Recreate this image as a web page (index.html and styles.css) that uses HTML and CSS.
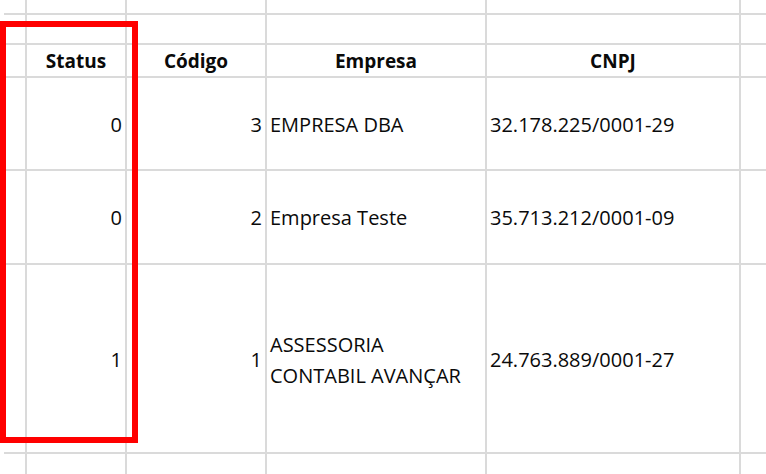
FILE: index.html
```html
<!DOCTYPE html>
<html lang="pt-BR">
<head>
<meta charset="utf-8">
<title>Empresas</title>
<link rel="stylesheet" href="styles.css">
</head>
<body>
<div class="sheet">
  <div class="grid">
    <div class="c"></div><div class="c"></div><div class="c"></div><div class="c"></div><div class="c"></div><div class="c"></div>
    <div class="c"></div><div class="c"></div><div class="c"></div><div class="c"></div><div class="c"></div><div class="c"></div>

    <div class="c"></div>
    <div class="c head">Status</div>
    <div class="c head">Código</div>
    <div class="c head">Empresa</div>
    <div class="c head">CNPJ</div>
    <div class="c"></div>

    <div class="c"></div>
    <div class="c num">0</div>
    <div class="c num">3</div>
    <div class="c txt">EMPRESA DBA</div>
    <div class="c txt">32.178.225/0001-29</div>
    <div class="c"></div>

    <div class="c"></div>
    <div class="c num">0</div>
    <div class="c num">2</div>
    <div class="c txt">Empresa Teste</div>
    <div class="c txt">35.713.212/0001-09</div>
    <div class="c"></div>

    <div class="c"></div>
    <div class="c num">1</div>
    <div class="c num">1</div>
    <div class="c txt wrap">ASSESSORIA<br>CONTABIL AVANÇAR</div>
    <div class="c txt">24.763.889/0001-27</div>
    <div class="c"></div>

    <div class="c"></div><div class="c"></div><div class="c"></div><div class="c"></div><div class="c"></div><div class="c"></div>
  </div>
  <div class="highlight"></div>
</div>
</body>
</html>
```
FILE: styles.css
```css
html, body {
  margin: 0;
  padding: 0;
  background: #ffffff;
  overflow: hidden;
}

.sheet {
  position: relative;
  width: 766px;
  height: 474px;
  overflow: hidden;
  background: #ffffff;
  padding-left: 4px;
  box-sizing: border-box;
}

.grid {
  display: grid;
  grid-template-columns: 21px 98px 138px 218px 252px 40px;
  grid-template-rows: 13px 28px 31px 91px 92px 187px 40px;
  gap: 2px;
  background: #dadada;
  width: 785px;
  font-family: "Open Sans", "Liberation Sans", sans-serif;
  font-size: 20px;
  color: #0a0a0a;
}

.c {
  background: #ffffff;
  display: flex;
  align-items: center;
  min-width: 0;
  white-space: nowrap;
  line-height: 26px;
}

.head {
  font-weight: 700;
  font-size: 19px;
  justify-content: center;
  align-items: flex-end;
  padding-bottom: 2px;
}

.num {
  justify-content: flex-end;
  padding: 2px 3px 0 0;
}

.txt {
  justify-content: flex-start;
  padding: 2px 0 0 3px;
}

.wrap {
  line-height: 31px;
}

.highlight {
  position: absolute;
  left: 0;
  top: 21px;
  width: 138px;
  height: 422px;
  border: 6px solid #ff0000;
  box-sizing: border-box;
  pointer-events: none;
}
```
